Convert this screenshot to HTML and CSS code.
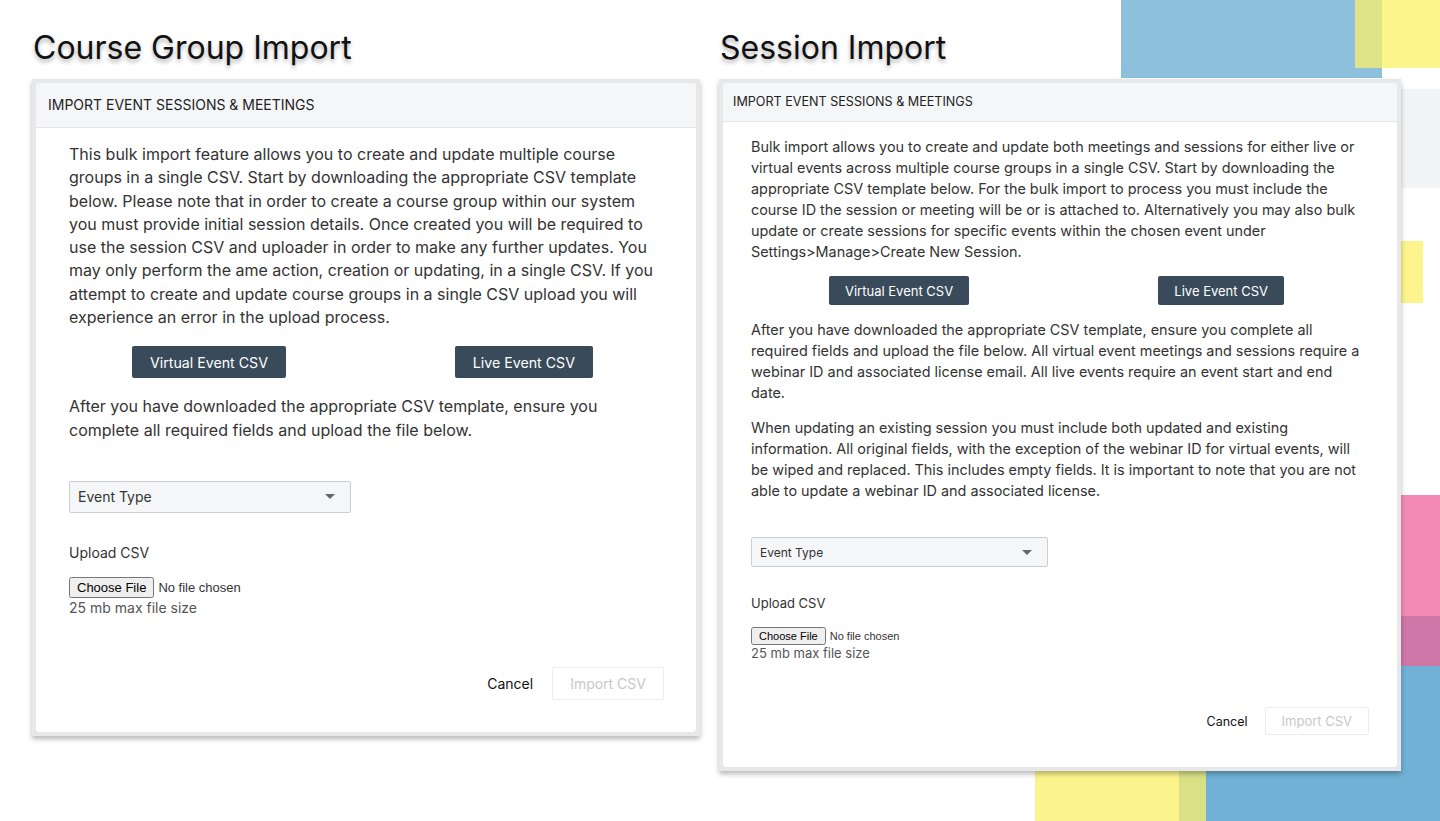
FILE: index.html
```html
<!DOCTYPE html>
<html lang="en">
<head>
  <meta charset="UTF-8">
  <meta name="viewport" content="width=device-width, initial-scale=1.0">
  <title>Import Screens</title>
  <link rel="stylesheet" href="styles.css">
</head>
<body>

  <!-- decorative colour blocks -->
  <div class="deco deco-blue-top"></div>
  <div class="deco deco-yellow-top"></div>
  <div class="deco deco-mix-top"></div>
  <div class="deco deco-grey"></div>
  <div class="deco deco-yellow-mid"></div>
  <div class="deco deco-pink"></div>
  <div class="deco deco-blue-bottom"></div>
  <div class="deco deco-purple"></div>
  <div class="deco deco-yellow-bottom"></div>
  <div class="deco deco-mix-bottom"></div>

  <div class="screens">

    <!-- Course group import -->
    <section class="screen screen-course">
      <h1 class="screen-title">Course Group Import</h1>
      <div class="frame">
        <div class="card">
          <div class="card-header">IMPORT EVENT SESSIONS &amp; MEETINGS</div>
          <div class="card-body">
            <p class="copy">This bulk import feature allows you to create and update multiple course groups in a single CSV. Start by downloading the appropriate CSV template below. Please note that in order to create a course group within our system you must provide initial session details. Once created you will be required to use the session CSV and uploader in order to make any further updates. You may only perform the ame action, creation or updating, in a single CSV. If you attempt to create and update course groups in a single CSV upload you will experience an error in the upload process.</p>

            <div class="templates">
              <button class="btn-dark">Virtual Event CSV</button>
              <button class="btn-dark">Live Event CSV</button>
            </div>

            <p class="copy">After you have downloaded the appropriate CSV template, ensure you complete all required fields and upload the file below.</p>

            <div class="select">
              <span>Event Type</span>
              <svg width="10" height="5" viewBox="0 0 10 5"><path d="M0 0h10L5 5z" fill="#666"/></svg>
            </div>

            <div class="upload-label">Upload CSV</div>
            <input type="file" class="file">
            <div class="hint">25 mb max file size</div>

            <div class="actions">
              <button class="btn-link">Cancel</button>
              <button class="btn-disabled" disabled>Import CSV</button>
            </div>
          </div>
        </div>
      </div>
    </section>

    <!-- Session import -->
    <section class="screen screen-session">
      <h1 class="screen-title">Session Import</h1>
      <div class="frame">
        <div class="card">
          <div class="card-header">IMPORT EVENT SESSIONS &amp; MEETINGS</div>
          <div class="card-body">
            <p class="copy">Bulk import allows you to create and update both meetings and sessions for either live or virtual events across multiple course groups in a single CSV. Start by downloading the appropriate CSV template below. For the bulk import to process you must include the course ID the session or meeting will be or is attached to. Alternatively you may also bulk update or create sessions for specific events within the chosen event under Settings&gt;Manage&gt;Create New Session.</p>

            <div class="templates">
              <button class="btn-dark">Virtual Event CSV</button>
              <button class="btn-dark">Live Event CSV</button>
            </div>

            <p class="copy">After you have downloaded the appropriate CSV template, ensure you complete all required fields and upload the file below. All virtual event meetings and sessions require a webinar ID and associated license email. All live events require an event start and end date.</p>

            <p class="copy copy-next">When updating an existing session you must include both updated and existing information. All original fields, with the exception of the webinar ID for virtual events, will be wiped and replaced. This includes empty fields. It is important to note that you are not able to update a webinar ID and associated license.</p>

            <div class="select">
              <span>Event Type</span>
              <svg width="10" height="5" viewBox="0 0 10 5"><path d="M0 0h10L5 5z" fill="#666"/></svg>
            </div>

            <div class="upload-label">Upload CSV</div>
            <input type="file" class="file">
            <div class="hint">25 mb max file size</div>

            <div class="actions">
              <button class="btn-link">Cancel</button>
              <button class="btn-disabled" disabled>Import CSV</button>
            </div>
          </div>
        </div>
      </div>
    </section>

  </div>
</body>
</html>
```

FILE: styles.css
```css
body {
  margin: 0;
  background: #fff;
  font-family: Inter, "Noto Sans", sans-serif;
  color: #333;
  height: 821px;
  overflow: hidden;
  position: relative;
}

/* Decorative blocks */
.deco { position: absolute; }
.deco-blue-top { left: 1121px; top: 0; width: 261px; height: 78px; background: #8cc0dc; }
.deco-yellow-top { left: 1382px; top: 0; width: 58px; height: 68px; background: #fbf58c; }
.deco-mix-top { left: 1355px; top: 0; width: 27px; height: 68px; background: #dee386; }
.deco-grey { left: 1390px; top: 89px; width: 50px; height: 99px; background: #f3f4f6; }
.deco-yellow-mid { left: 1390px; top: 241px; width: 33px; height: 62px; background: #fbf58c; }
.deco-pink { left: 1390px; top: 495px; width: 50px; height: 121px; background: #f28ab4; }
.deco-purple { left: 1390px; top: 616px; width: 50px; height: 50px; background: #cf76a8; }
.deco-blue-bottom { left: 1206px; top: 666px; width: 234px; height: 155px; background: #70b1d5; }
.deco-yellow-bottom { left: 1035px; top: 700px; width: 144px; height: 121px; background: #fbf48c; }
.deco-mix-bottom { left: 1179px; top: 700px; width: 27px; height: 121px; background: #d8e185; }

/* Layout */
.screens {
  position: relative;
  display: flex;
  align-items: flex-start;
  gap: 19px;
  padding: 27px 0 0 32px;
}
.screen-course { width: 668px; }
.screen-session { width: 682px; }

.screen-title {
  margin: 0 0 10px 1px;
  font-size: 32px;
  font-weight: 400;
  line-height: 42px;
  color: #111;
  text-shadow: 0 3px 4px rgba(0, 0, 0, 0.3);
}

.frame {
  background: #e8e8ea;
  padding: 4px;
  box-shadow: 0 3px 5px rgba(0, 0, 0, 0.28);
}

.card {
  background: #fff;
  border-radius: 4px;
  overflow: hidden;
}

.card-header {
  background: #f5f6f8;
  border-bottom: 1px solid #e3e5e8;
  color: #222;
  font-size: 14px;
  height: 44px;
  line-height: 44px;
  padding: 0 12px;
}

.card-body {
  padding: 15px 32px 32px 33px;
}

.copy {
  margin: 0;
  font-size: 16px;
  line-height: 23.3px;
}

.templates {
  display: flex;
  justify-content: space-between;
  margin: 17px 0 17px;
  padding: 0 71px 0 63px;
}

.btn-dark {
  background: #394b5b;
  color: #fff;
  border: 0;
  border-radius: 2px;
  font-family: Inter, sans-serif;
  font-size: 14.2px;
  height: 32px;
  padding: 0 18px;
}

.select {
  display: flex;
  justify-content: space-between;
  align-items: center;
  width: 257px;
  height: 30px;
  margin-top: 39px;
  padding: 0 15px 0 8px;
  background: #f5f6f8;
  border: 1px solid #ccced2;
  border-radius: 2px;
  font-size: 14px;
  color: #333;
}

.upload-label {
  margin-top: 30px;
  font-size: 14px;
  line-height: 20px;
}

.file {
  display: block;
  margin-top: 14px;
  font-family: "Liberation Sans", Arial, sans-serif;
  font-size: 13px;
}

.hint {
  font-size: 14px;
  line-height: 20px;
  color: #555;
}

.actions {
  display: flex;
  justify-content: flex-end;
  align-items: center;
  gap: 19px;
  margin-top: 49px;
}

.btn-link {
  background: none;
  border: 0;
  font-family: Inter, sans-serif;
  font-size: 14px;
  color: #111;
  padding: 0;
}

.btn-disabled {
  background: #fff;
  border: 1px solid #eceeee;
  border-radius: 2px;
  color: #c8c8c8;
  font-family: Inter, sans-serif;
  font-size: 14px;
  height: 33px;
  padding: 0 17px;
}

/* Session screen is a bit denser */
.screen-session .card-header {
  height: 38px;
  line-height: 38px;
  font-size: 12.6px;
  padding: 0 10px;
}
.screen-session .card-body { padding: 14px 28px 32px; }
.screen-session .copy { font-size: 14.4px; line-height: 21px; }
.screen-session .copy-next { margin-top: 14px; }
.screen-session .templates { margin: 14px 0; padding: 0 85px 0 78px; }
.screen-session .btn-dark { font-size: 13px; height: 29px; padding: 0 16px; }
.screen-session .select { width: 272px; height: 28px; margin-top: 36px; padding-right: 15px; font-size: 12px; }
.screen-session .upload-label { margin-top: 27px; font-size: 13px; line-height: 18px; }
.screen-session .file { font-size: 11px; margin-top: 15px; }
.screen-session .hint { font-size: 13px; line-height: 16px; }
.screen-session .actions { margin-top: 46px; gap: 17px; }
.screen-session .btn-link { font-size: 12.5px; }
.screen-session .btn-disabled { font-size: 13px; height: 28px; padding: 0 16px; }
```
